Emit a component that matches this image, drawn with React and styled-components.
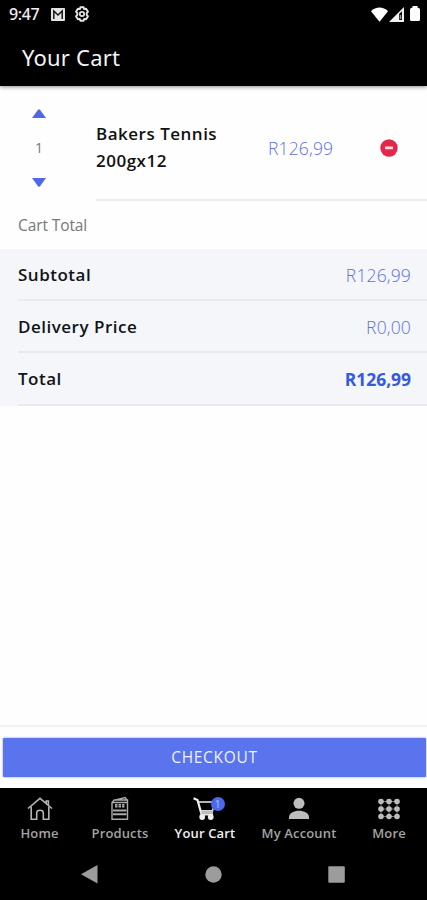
import React from 'react';
import styled, { createGlobalStyle } from 'styled-components';

const GlobalStyle = createGlobalStyle`
  * {
    box-sizing: border-box;
  }
  body {
    margin: 0;
    background: #fff;
    font-family: 'Open Sans', 'Noto Sans', sans-serif;
  }
`;
const Screen = styled.div`
  display: flex;
  flex-direction: column;
  width: 427px;
  height: 900px;
  overflow: hidden;
  background: #fefefe;
`;
const StatusBar = styled.div`
  display: flex;
  align-items: center;
  height: 28px;
  padding: 0 7px 0 9px;
  background: #000;
  color: #eee;
`;
const Clock = styled.span`
  width: 42px;
  font-family: 'Noto Sans', sans-serif;
  font-size: 16px;
  font-weight: 500;
  letter-spacing: -0.4px;
  line-height: 28px;
`;
const StatusIcons = styled.div`
  display: flex;
  align-items: center;
  gap: ${props => props.$gap}px;
  margin-left: ${props => (props.$end ? 'auto' : 0)};

  svg {
    display: block;
  }
`;
const Battery = styled.svg`
  margin-left: 5px;
`;
const Header = styled.header`
  flex: none;
  height: 58px;
  padding-left: 22px;
  background: #000;
  box-shadow: 0 1px 4px rgba(0, 0, 0, 0.45);
`;
const Title = styled.h1`
  margin: 0;
  font-family: 'Noto Sans', sans-serif;
  font-size: 22px;
  font-weight: 400;
  letter-spacing: 0.2px;
  line-height: 58px;
  color: #f4f4f4;
`;
const CartItem = styled.div`
  display: flex;
  flex: none;
  height: 115px;
`;
const Quantity = styled.div`
  display: flex;
  flex-direction: column;
  align-items: center;
  width: 96px;
  padding: 23px 18px 0 0;
`;
const Arrow = styled.svg`
  display: block;
  width: 14px;
  height: 9px;
  fill: #5068e8;
`;
const Count = styled.span`
  height: 60px;
  font-size: 14px;
  line-height: 60px;
  color: #777;
`;
const ItemBody = styled.div`
  display: flex;
  flex: 1;
  align-items: center;
  padding-top: 10px;
  border-bottom: 2px solid #ebebed;
`;
const ItemName = styled.div`
  width: 172px;
  margin-top: -2px;
  padding-right: 40px;
  font-size: 17px;
  font-weight: 600;
  letter-spacing: 0.5px;
  line-height: 27px;
  color: #111;
`;
const Price = styled.span`
  font-size: 17.5px;
  font-weight: ${props => (props.$bold ? 700 : 300)};
  letter-spacing: ${props => (props.$bold ? -0.05 : 0.15)}px;
  line-height: 24px;
  color: ${props => (props.$bold ? '#3459e2' : '#5e70e6')};
`;
const RemoveButton = styled.button`
  width: 18px;
  height: 18px;
  margin: 0 29px 0 auto;
  padding: 0;
  border: 0;
  background: none;

  svg {
    display: block;
  }
`;
const SectionTitle = styled.h2`
  flex: none;
  height: 48px;
  margin: 0;
  padding-left: 18px;
  font-size: 15.5px;
  font-weight: 400;
  letter-spacing: -0.1px;
  line-height: 48px;
  color: #777;
`;
const Totals = styled.div`
  flex: none;
  padding-left: 18px;
  background: #f4f6fa;
`;
const TotalRow = styled.div`
  display: flex;
  align-items: center;
  justify-content: space-between;
  height: 52px;
  padding: 1px 16px 0 0;
  border-bottom: 2px solid #e8eaee;

  &:last-child {
    height: 53px;
  }
`;
const Label = styled.span`
  font-size: 17px;
  font-weight: 600;
  letter-spacing: 0.5px;
  line-height: 24px;
  color: #111317;
`;
const Footer = styled.div`
  height: 63px;
  margin-top: auto;
  padding: 11px 1px 0 3px;
  border-top: 2px solid #f3f3f3;
  background: #fefefe;
`;
const Checkout = styled.button`
  display: block;
  width: 100%;
  height: 39px;
  padding: 0;
  border: 0;
  border-radius: 1px;
  background: #5a74ee;
  box-shadow: 0 0 2px rgba(40, 55, 150, 0.65);
  font-family: 'Open Sans', sans-serif;
  font-size: 15.5px;
  letter-spacing: 0.7px;
  line-height: 39px;
  color: #eef1ff;
`;
const Tabs = styled.nav`
  display: flex;
  flex: none;
  height: 60px;
  background: #000;
`;
const Tab = styled.div`
  display: flex;
  flex: none;
  flex-direction: column;
  align-items: center;
  width: ${props => props.$width}px;
  padding-top: 8px;
  font-size: 13px;
  font-weight: 600;
  letter-spacing: 0.15px;
  line-height: 18px;
  white-space: nowrap;
  color: ${props => (props.$active ? '#f2f2f2' : '#a3a3a3')};

  svg {
    display: block;
  }
`;
const TabIcon = styled.div`
  position: relative;
  height: 28px;
`;
const Badge = styled.span`
  position: absolute;
  top: 1px;
  left: 19px;
  width: 14px;
  height: 14px;
  border-radius: 50%;
  background: #4a68ea;
  font-size: 10px;
  font-weight: 400;
  letter-spacing: 0;
  line-height: 14px;
  text-align: center;
  color: #b9c7ff;
`;
const SystemBar = styled.div`
  display: flex;
  flex: none;
  justify-content: space-between;
  height: 52px;
  padding: 17px 82px 0 81px;
  background: #000;

  svg {
    display: block;
    fill: #9c9c9c;
  }
`;

const MailIcon = () => (
  <svg width="14" height="13" viewBox="0 0 14 13">
    <rect width="14" height="13" rx="1" fill="#e4e4e4" />
    <path d="M2.8 11V3l4.2 4 4.2-4v8" fill="none" stroke="#161616" strokeWidth="1.5" />
  </svg>
);

const GearIcon = () => (
  <svg width="16" height="16" viewBox="0 0 16 16" fill="none" stroke="#e4e4e4">
    <path
      d="M6.4 1.2h3.2l.6 1.9 1.9-.4 1.9 3-1.3 1.5v1.6l1.3 1.5-1.9 3-1.9-.4-.6 1.9H6.4l-.6-1.9-1.9.4-1.9-3 1.3-1.5V7.2L2 5.7l1.9-3 1.9.4z"
      strokeWidth="1.9"
      strokeLinejoin="round"
    />
    <circle cx="8" cy="8" r="2.2" strokeWidth="1.7" />
  </svg>
);

const WifiIcon = () => (
  <svg width="17" height="15" viewBox="0 0 17 15" fill="#fff">
    <path d="M0 4.2C4.8-.6 12.2-.6 17 4.2L8.5 14.7z" />
  </svg>
);

const SignalIcon = () => (
  <svg width="15" height="15" viewBox="0 0 15 15">
    <path d="M0 15 15 0v15z" fill="#f0f0f0" />
    <path d="M10.2 6.8 13 4.2v8.9h-2.8z" fill="#0c0c0c" />
    <path d="M11.7 8v4" stroke="#bbb" />
  </svg>
);

const BatteryIcon = () => (
  <Battery width="10" height="16" viewBox="0 0 10 16" fill="#fff">
    <path d="M2.5 0h5v1.4q2.5.4 2.5 2v10q0 1.6-1.6 1.6H1.6Q0 15 0 13.4v-10q0-1.6 2.5-2z" />
  </Battery>
);

const RemoveIcon = () => (
  <svg width="18" height="18" viewBox="0 0 18 18">
    <circle cx="9" cy="9" r="8.7" fill="#e3264a" />
    <rect x="5" y="7.6" width="8" height="2.6" rx=".5" fill="#ffdce2" />
  </svg>
);

const HomeIcon = () => (
  <svg width="26" height="26" viewBox="0 0 26 26" fill="none" stroke="#b4b4b4" strokeWidth="1.6">
    <path d="M1 12.5 13 2.4l12 10.1M19.2 7.4V5h2.2v4.2" />
    <path d="M4.2 10.5v12.7h5.5v-6.4q0-2.6 3.3-2.6t3.3 2.6v6.4h5.5V10.5" />
  </svg>
);

const ProductsIcon = () => (
  <svg width="18" height="26" viewBox="0 0 18 26" fill="none" stroke="#aaa" strokeWidth="1.4">
    <path d="M1 6.5 3.2 4h13.3v19.3H1zM1 6.5h15.5M4.5 4l9.7-2.4 1.6 2.2" />
    <path d="M4 8.9h10M4 10.8h10" strokeDasharray="2.5 1" strokeWidth="1.6" />
    <path d="M2 14.5h13.5M2 18.2h13.5" strokeWidth="1.9" />
  </svg>
);

const CartIcon = () => (
  <svg width="27" height="26" viewBox="0 0 27 26" fill="none" stroke="#eee">
    <path d="M1.5 2.2 5.5 4l4.1 14.4h11.5" strokeWidth="2.2" strokeLinejoin="round" />
    <path d="M7 6h16l-2.5 8.8H9" strokeWidth="1.4" />
    <path d="M9.2 14.5h12.2l-.8 3.7h-11z" fill="#bbb" stroke="none" />
    <circle cx="10.2" cy="21" r="2.9" fill="#eee" stroke="none" />
    <circle cx="18.7" cy="21" r="2.9" fill="#eee" stroke="none" />
  </svg>
);

const AccountIcon = () => (
  <svg width="22" height="26" viewBox="0 0 22 26" fill="#bdbdbd">
    <circle cx="11" cy="7.3" r="5.5" />
    <path d="M1 23v-2c0-4 5-6.3 10-6.3S21 17 21 21v2z" />
  </svg>
);

const MoreIcon = () => (
  <svg width="22" height="26" viewBox="0 0 22 26" fill="#bdbdbd">
    <path d="M3 5.5h16M3 13h16M3 20.5h16M3 5.5v15M11 5.5v15M19 5.5v15" stroke="#777" />
    {[5.5, 13, 20.5].map(y =>
      [3, 11, 19].map(x => <circle key={`${x}-${y}`} cx={x} cy={y} r="2.8" />)
    )}
  </svg>
);

const totals = [
  { label: 'Subtotal', price: 'R126,99' },
  { label: 'Delivery Price', price: 'R0,00' },
  { label: 'Total', price: 'R126,99', bold: true },
];

const tabs = [
  { label: 'Home', width: 79, Icon: HomeIcon },
  { label: 'Products', width: 82, Icon: ProductsIcon },
  { label: 'Your Cart', width: 88, Icon: CartIcon, badge: 1, active: true },
  { label: 'My Account', width: 100, Icon: AccountIcon },
  { label: 'More', width: 80, Icon: MoreIcon },
];

export default function App() {
  return (
    <Screen>
      <GlobalStyle />
      <StatusBar>
        <Clock>9:47</Clock>
        <StatusIcons $gap={9}>
          <MailIcon />
          <GearIcon />
        </StatusIcons>
        <StatusIcons $gap={1} $end>
          <WifiIcon />
          <SignalIcon />
          <BatteryIcon />
        </StatusIcons>
      </StatusBar>
      <Header>
        <Title>Your Cart</Title>
      </Header>

      <CartItem>
        <Quantity>
          <Arrow viewBox="0 0 14 9">
            <path d="M0 9 6 .8q1-1 2 0L14 9z" />
          </Arrow>
          <Count>1</Count>
          <Arrow viewBox="0 0 14 9">
            <path d="M0 0l6 8.2q1 1 2 0L14 0z" />
          </Arrow>
        </Quantity>
        <ItemBody>
          <ItemName>Bakers Tennis 200gx12</ItemName>
          <Price>R126,99</Price>
          <RemoveButton aria-label="Remove">
            <RemoveIcon />
          </RemoveButton>
        </ItemBody>
      </CartItem>

      <SectionTitle>Cart Total</SectionTitle>
      <Totals>
        {totals.map(({ label, price, bold }) => (
          <TotalRow key={label}>
            <Label>{label}</Label>
            <Price $bold={bold}>{price}</Price>
          </TotalRow>
        ))}
      </Totals>

      <Footer>
        <Checkout>CHECKOUT</Checkout>
      </Footer>
      <Tabs>
        {tabs.map(({ label, width, Icon, badge, active }) => (
          <Tab key={label} $width={width} $active={active}>
            <TabIcon>
              <Icon />
              {badge && <Badge>{badge}</Badge>}
            </TabIcon>
            {label}
          </Tab>
        ))}
      </Tabs>
      <SystemBar>
        <svg width="17" height="19" viewBox="0 0 17 19">
          <path d="M0 9.3 16.5 0v18.5z" />
        </svg>
        <svg width="17" height="19" viewBox="0 0 17 19">
          <circle cx="8.5" cy="9.5" r="8.2" />
        </svg>
        <svg width="17" height="19" viewBox="0 0 17 19">
          <rect x=".3" y="1.2" width="16.5" height="16.5" rx="1" />
        </svg>
      </SystemBar>
    </Screen>
  );
}
